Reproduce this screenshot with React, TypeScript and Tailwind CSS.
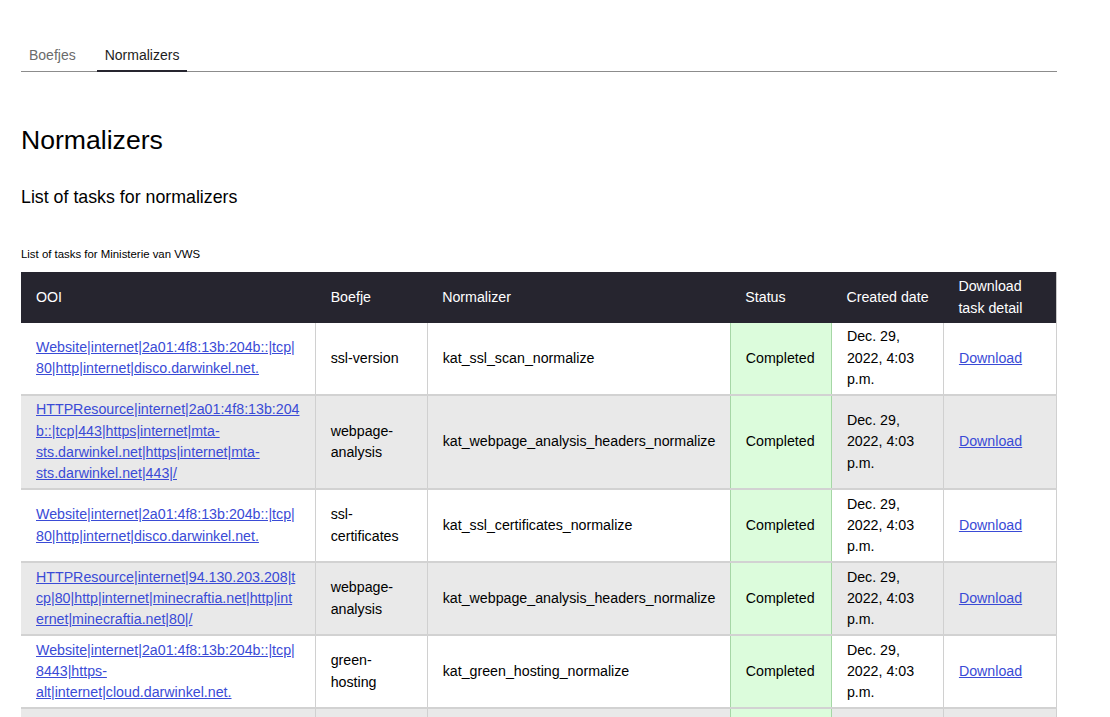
import React from "react";

const WJ = "\u2060";
const ooi = (s: string) => s.split("|").join("|" + WJ);

type Row = { ooi: string; boefje: string; normalizer: string };

const rows: Row[] = [
  {
    ooi: "Website|internet|2a01:4f8:13b:204b::|tcp|80|http|internet|disco.darwinkel.net.",
    boefje: "ssl-version",
    normalizer: "kat_ssl_scan_normalize",
  },
  {
    ooi: "HTTPResource|internet|2a01:4f8:13b:204b::|tcp|443|https|internet|mta-sts.darwinkel.net|https|internet|mta-sts.darwinkel.net|443|/",
    boefje: "webpage-analysis",
    normalizer: "kat_webpage_analysis_headers_normalize",
  },
  {
    ooi: "Website|internet|2a01:4f8:13b:204b::|tcp|80|http|internet|disco.darwinkel.net.",
    boefje: "ssl-certificates",
    normalizer: "kat_ssl_certificates_normalize",
  },
  {
    ooi: "HTTPResource|internet|94.130.203.208|tcp|80|http|internet|minecraftia.net|http|internet|minecraftia.net|80|/",
    boefje: "webpage-analysis",
    normalizer: "kat_webpage_analysis_headers_normalize",
  },
  {
    ooi: "Website|internet|2a01:4f8:13b:204b::|tcp|8443|https-alt|internet|cloud.darwinkel.net.",
    boefje: "green-hosting",
    normalizer: "kat_green_hosting_normalize",
  },
  {
    ooi: "Website|internet|2a01:4f8:13b:204b::|tcp|443|https|internet|cloud.darwinkel.net.",
    boefje: "ssl-version",
    normalizer: "kat_ssl_scan_normalize",
  },
  {
    ooi: "Website|internet|2a01:4f8:13b:204b::|tcp|443|https|internet|disco.darwinkel.net.",
    boefje: "ssl-certificates",
    normalizer: "kat_ssl_certificates_normalize",
  },
];

export default function App() {
  return (
    <div
      className="min-h-screen bg-white text-black"
      style={{ fontFamily: '"Liberation Sans", Arial, sans-serif' }}
    >
      <div className="ml-[21px] w-[1036px] pt-[45px]">
        <nav className="flex gap-[13px] border-b border-[#8c8c8c]">
          <span className="px-[8px] pb-[4px] text-[14px] leading-[21px] text-[#6b6b6b] border-b-2 border-transparent -mb-px">
            Boefjes
          </span>
          <span className="px-[8px] pb-[4px] text-[14px] leading-[21px] text-[#1d1d1d] border-b-2 border-[#26252f] -mb-px">
            Normalizers
          </span>
        </nav>

        <h1 className="mt-[52px] text-[26.6px] leading-[32px] font-normal">Normalizers</h1>
        <h2 className="mt-[31px] text-[17.8px] leading-[21.3px] font-normal">
          List of tasks for normalizers
        </h2>

        <table className="mt-[38px] w-[1036px] table-fixed border-collapse text-[14.22px] leading-[21.33px]">
          <caption className="caption-top text-left text-[11.4px] leading-[17px] pb-[9px]">
            List of tasks for Ministerie van VWS
          </caption>
          <colgroup>
            <col className="w-[294px]" />
            <col className="w-[112px]" />
            <col className="w-[303px]" />
            <col className="w-[101px]" />
            <col className="w-[112px]" />
            <col className="w-[113px]" />
          </colgroup>
          <thead>
            <tr className="bg-[#26252f] text-white">
              <th className="px-[15px] py-[4px] text-left font-normal border-r border-[#26252f]">OOI</th>
              <th className="px-[15px] py-[4px] text-left font-normal">Boefje</th>
              <th className="px-[15px] py-[4px] text-left font-normal">Normalizer</th>
              <th className="px-[15px] py-[4px] text-left font-normal">Status</th>
              <th className="px-[15px] py-[4px] text-left font-normal whitespace-nowrap">Created date</th>
              <th className="px-[15px] py-[4px] text-left font-normal border-r border-[#c8c8c8]">
                Download task detail
              </th>
            </tr>
          </thead>
          <tbody>
            {rows.map((r, i) => (
              <tr
                key={i}
                className={`${i % 2 === 1 ? "bg-[#e9e9e9]" : "bg-white"} border-b-2 border-[#d2d2d2]`}
              >
                <td className="px-[15px] py-[3.5px] align-middle border-r border-[#d0d0d0] [overflow-wrap:anywhere]">
                  <a href="#" className="text-[#3a4bd6] underline">
                    {ooi(r.ooi)}
                  </a>
                </td>
                <td className="px-[15px] py-[3.5px] align-middle border-r border-[#d0d0d0]">{r.boefje}</td>
                <td className="px-[15px] py-[3.5px] align-middle border-r border-[#a6d6a6]">{r.normalizer}</td>
                <td className="px-[15px] py-[3.5px] align-middle bg-[#dcfcdc] border-x border-[#a6d6a6]">
                  Completed
                </td>
                <td className="px-[15px] py-[3.5px] align-middle border-r border-[#d0d0d0]">
                  Dec. 29, 2022, 4:03 p.m.
                </td>
                <td className="px-[15px] py-[3.5px] align-middle border-r border-[#d0d0d0]">
                  <a href="#" className="text-[#3a4bd6] underline">
                    Download
                  </a>
                </td>
              </tr>
            ))}
          </tbody>
        </table>
      </div>
    </div>
  );
}
